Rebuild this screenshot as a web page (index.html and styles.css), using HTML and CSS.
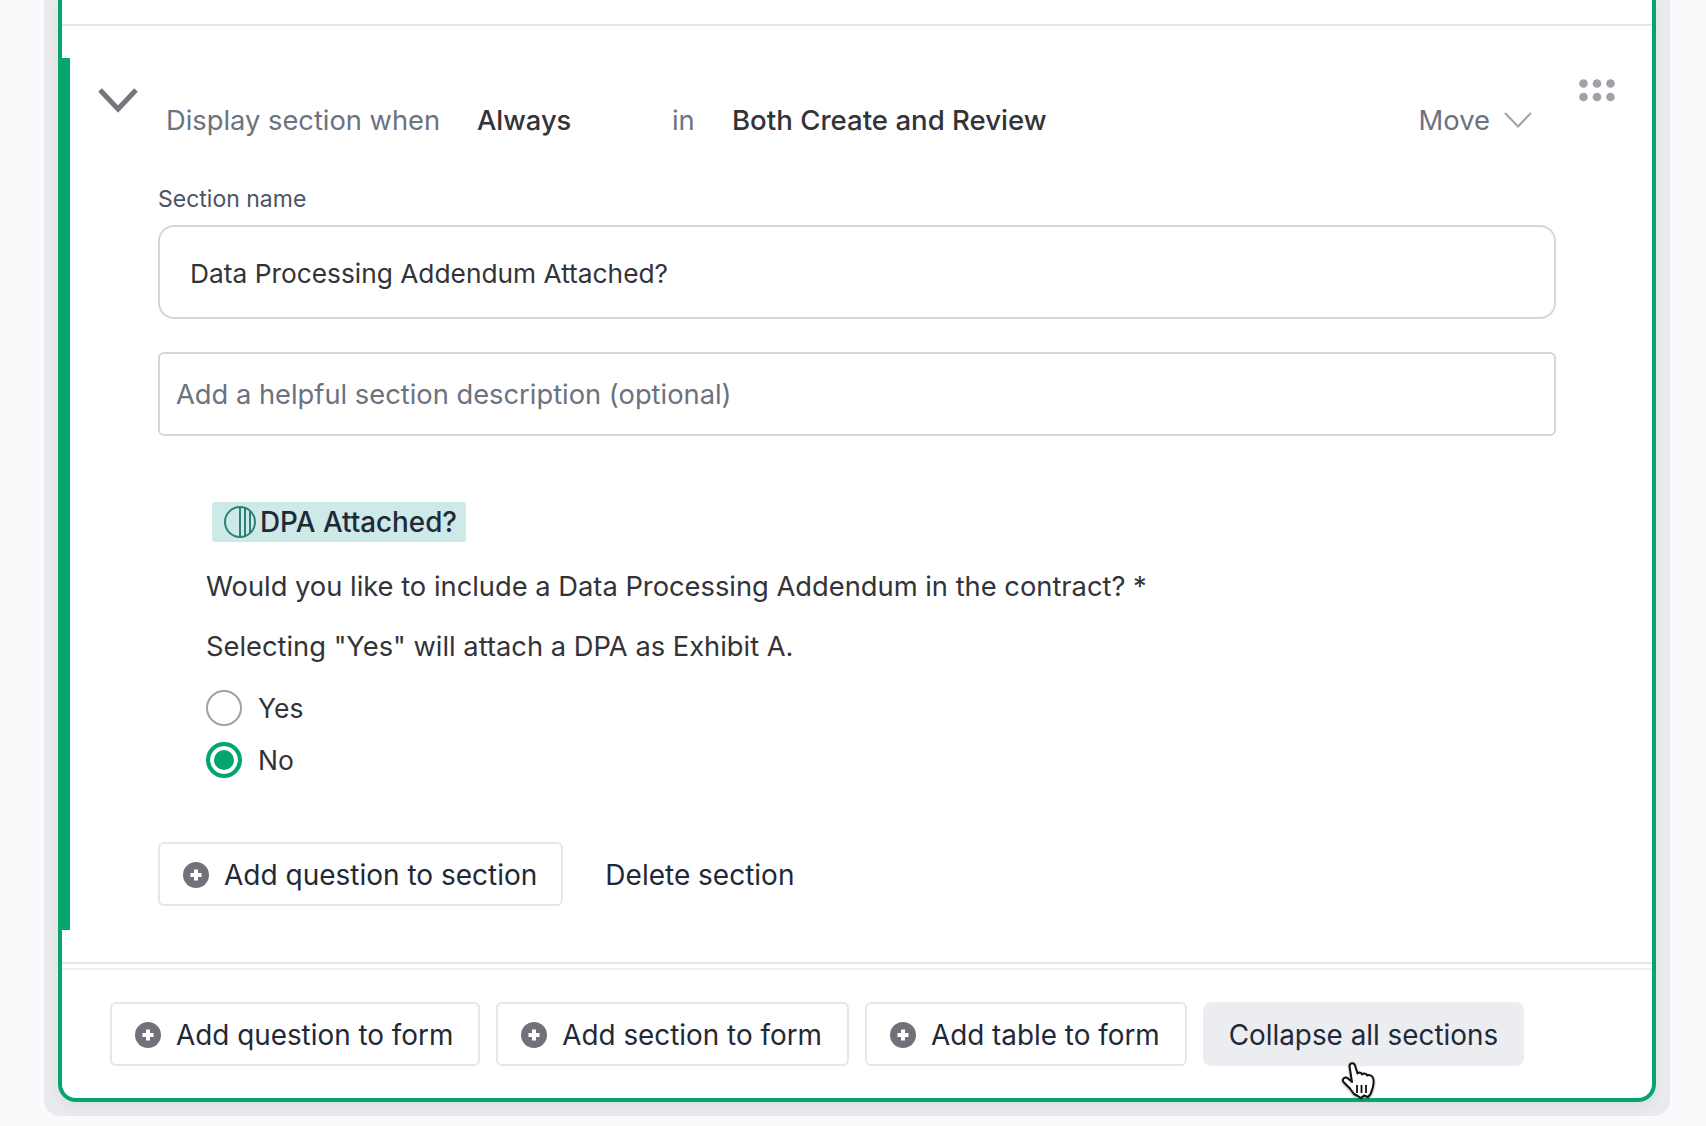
FILE: index.html
```html
<!DOCTYPE html>
<html lang="en">
<head>
<meta charset="utf-8">
<title>Section editor</title>
<link rel="stylesheet" href="styles.css">
</head>
<body>
<div class="shell">
  <main class="card">
    <div class="top-strip"></div>
    <section class="section">
      <header class="sec-head">
        <svg class="collapse" width="40" height="26" viewBox="0 0 40 26"><path d="M2 3 L20 22 L38 3" fill="none" stroke="#75757e" stroke-width="5"/></svg>
        <div class="rule">
          <span class="muted when-label">Display section when</span>
          <span class="value val-always">Always</span>
          <span class="muted val-in">in</span>
          <span class="value val-both">Both Create and Review</span>
        </div>
        <div class="move">
          <span class="muted">Move</span>
          <svg width="28" height="16" viewBox="0 0 28 16"><path d="M1 1 L14 14.500 L27 1" fill="none" stroke="#a1a1aa" stroke-width="2"/></svg>
        </div>
        <svg class="drag" width="36" height="24" viewBox="0 0 36 24" fill="#a1a1aa"><circle cx="4.500" cy="4.500" r="4.300"/><circle cx="18" cy="4.500" r="4.300"/><circle cx="31.500" cy="4.500" r="4.300"/><circle cx="4.500" cy="18" r="4.300"/><circle cx="18" cy="18" r="4.300"/><circle cx="31.500" cy="18" r="4.300"/></svg>
      </header>
      <div class="sec-body">
        <label class="field-label" for="sname">Section name</label>
        <input class="input-name" id="sname" type="text" value="Data Processing Addendum Attached?">
        <input class="input-desc" type="text" placeholder="Add a helpful section description (optional)">
        <div class="question">
          <div class="chip">
            <svg width="34" height="34" viewBox="0 0 34 34" fill="none" stroke="#2f7f78" stroke-width="2"><circle cx="17" cy="17" r="15"/><path d="M17 2V32M22 3V31M27 6V28"/></svg>
            <span>DPA Attached?</span>
          </div>
          <p class="q-text q-first">Would you like to include a Data Processing Addendum in the contract? *</p>
          <p class="q-text q-second">Selecting "Yes" will attach a DPA as Exhibit A.</p>
          <div class="option opt-yes"><span class="radio"></span><span>Yes</span></div>
          <div class="option opt-no"><span class="radio radio-on"></span><span>No</span></div>
        </div>
        <div class="sec-actions">
          <button class="btn" type="button"><svg class="plus" width="26" height="26" viewBox="0 0 26 26"><circle cx="13" cy="13" r="13" fill="#71717a"/><path d="M13 7.500V18.500M7.500 13H18.500" stroke="#fff" stroke-width="4"/></svg>Add question to section</button>
          <button class="btn-plain" type="button">Delete section</button>
        </div>
      </div>
    </section>
    <div class="rule-a"></div>
    <footer class="foot">
      <button class="btn" type="button"><svg class="plus" width="26" height="26" viewBox="0 0 26 26"><circle cx="13" cy="13" r="13" fill="#71717a"/><path d="M13 7.500V18.500M7.500 13H18.500" stroke="#fff" stroke-width="4"/></svg>Add question to form</button>
      <button class="btn" type="button"><svg class="plus" width="26" height="26" viewBox="0 0 26 26"><circle cx="13" cy="13" r="13" fill="#71717a"/><path d="M13 7.500V18.500M7.500 13H18.500" stroke="#fff" stroke-width="4"/></svg>Add section to form</button>
      <button class="btn" type="button"><svg class="plus" width="26" height="26" viewBox="0 0 26 26"><circle cx="13" cy="13" r="13" fill="#71717a"/><path d="M13 7.500V18.500M7.500 13H18.500" stroke="#fff" stroke-width="4"/></svg>Add table to form</button>
      <button class="btn btn-hover" type="button">Collapse all sections</button>
    </footer>
  </main>
  <svg class="cursor" width="36" height="38" viewBox="0 0 36 38"><path d="M8.500 5C9 1.500 13 1.500 14 4.500L16.500 12.500C18 11 20.500 11.500 21 13.500C23 12 25.500 12.500 26 14.500C28 13.500 31 14.500 32 17C33.500 21 32 27 29.500 33L27 36L23 34.500L20 37L16 34.500L13 33L9 27.500L2.500 21C0.500 18 4 15 7 17.500L11 21Z" fill="#fff" stroke="#111" stroke-width="2" stroke-linejoin="round"/><path d="M16 24V32M20.500 24V32M25 24V32" stroke="#111" stroke-width="1.800"/></svg>
</div>
</body>
</html>
```
FILE: styles.css
```css
* { box-sizing: border-box; }
html, body { margin: 0; height: 100%; }
body {
  background: #f9fafb;
  font-family: Inter, "Liberation Sans", sans-serif;
  color: #333338;
  font-size: 27.300px;
  padding: 0 36px 10px 44px;
  overflow: hidden;
}
.shell {
  position: relative;
  height: 100%;
  background: #e9eaee;
  padding: 0 14px 14px;
  border-radius: 0 0 16px 16px;
}
.card {
  height: 100%;
  background: #fff;
  border: 4px solid #05a66e;
  border-top: none;
  border-radius: 0 0 18px 18px;
  box-shadow: 0 6px 10px rgba(60, 65, 85, 0.05);
}
.top-strip { height: 26px; border-bottom: 2px solid #e5e6ea; }
.section {
  margin: 32px 0 32px -4px;
  padding: 21px 36px 24px 28px;
  border-left: 12px solid #05a66e;
}
.sec-head { display: flex; align-items: flex-start; }
.collapse { margin-top: 8px; flex: none; }
.rule { display: flex; align-items: baseline; height: 36px; margin: 23px 0 1px 28px; line-height: 36px; }
.muted { color: #6b7280; }
.value { font-weight: 500; color: #333338; }
.when-label { width: 311px; white-space: nowrap; }
.val-always { width: 195px; }
.val-in { width: 60px; }
.val-both { font-size: 27.600px; white-space: nowrap; }
.move { display: flex; align-items: center; gap: 14px; height: 36px; margin: 23px 0 0 auto; line-height: 36px; font-size: 27.400px; }
.drag { margin: 0 1px 0 47px; flex: none; }
.sec-body { padding: 0 60px 0 60px; }
.field-label { display: block; margin-top: 45px; font-size: 23px; line-height: 30px; color: #4b5563; }
input {
  display: block;
  width: 100%;
  font: inherit;
  color: #333338;
  background: #fff;
  outline: none;
}
.input-name { height: 94px; margin-top: 11px; padding: 2px 30px 0; font-size: 26.300px; border: 2px solid #d5d6db; border-radius: 16px; }
.input-desc { height: 84px; margin-top: 33px; padding: 0 16px; border: 2px solid #d5d6db; border-radius: 6px; }
.input-desc::placeholder { color: #6b7280; opacity: 1; }
.question { padding-left: 48px; margin-top: 66px; }
.chip {
  display: inline-flex;
  align-items: center;
  gap: 3px;
  height: 40px;
  margin-left: 6px;
  padding: 0 9px 0 11px;
  background: #cdeae8;
  border-radius: 3px;
  font-size: 27.800px;
  font-weight: 500;
  color: #1f2937;
}
.q-text { margin: 0; line-height: 36px; }
.q-first { margin-top: 23px; }
.q-second { margin-top: 24px; }
.option { display: flex; align-items: center; gap: 16px; line-height: 36px; height: 36px; font-size: 26.500px; }
.opt-yes { margin-top: 25px; }
.opt-no { margin-top: 16px; }
.radio { width: 36px; height: 36px; border: 2px solid #a1a1aa; border-radius: 50%; background: #fff; flex: none; }
.radio-on { border: 4px solid #05a66e; box-shadow: inset 0 0 0 4px #fff; background: #05a66e; }
.sec-actions { display: flex; align-items: center; gap: 16px; margin-top: 64px; }
button { font: inherit; font-size: 28px; color: #1f2937; cursor: pointer; }
.btn {
  display: inline-flex;
  align-items: center;
  gap: 15px;
  height: 64px;
  padding: 1px 24px 0 23px;
  background: #fff;
  border: 2px solid #e5e6ea;
  border-radius: 6px;
  white-space: nowrap;
}
.btn-plain { height: 64px; padding: 2px 26px 0; background: none; border: none; }
.plus { flex: none; }
.rule-a { height: 8px; border-top: 2px solid #e5e6ea; border-bottom: 2px solid #eeeff2; }
.foot { display: flex; gap: 16px; padding: 32px 0 0 48px; }
.foot .btn { font-size: 27.850px; padding-right: 25px; }
.foot .btn-hover { background: #ecedf1; border-color: #ecedf1; padding: 1px 24px 0; border-radius: 8px; }
.cursor { position: absolute; left: 1297px; top: 1061px; filter: drop-shadow(0 1px 1px rgba(0, 0, 0, 0.4)); }
```
